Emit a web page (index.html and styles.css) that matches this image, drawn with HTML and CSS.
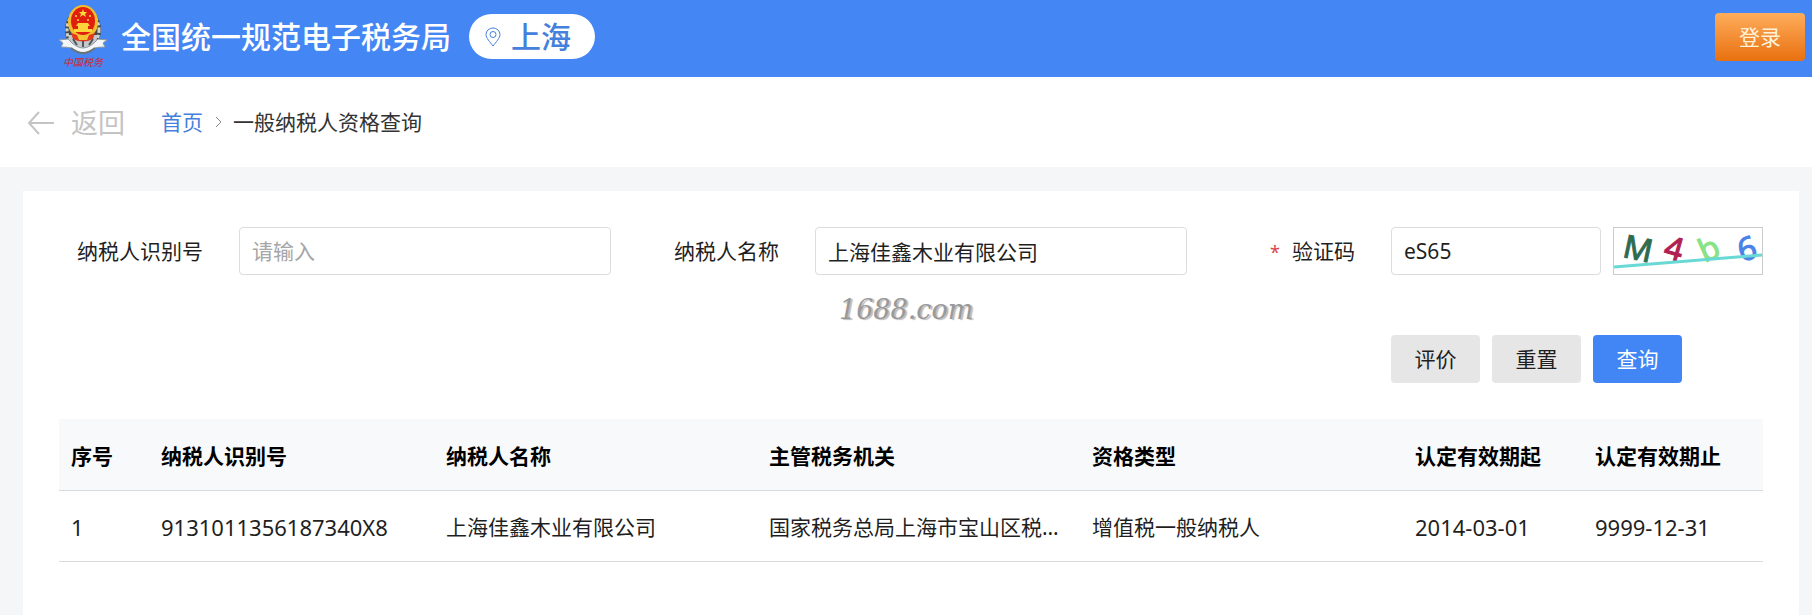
FILE: index.html
```html
<!DOCTYPE html>
<html lang="zh-CN">
<head>
<meta charset="utf-8">
<meta name="viewport" content="width=device-width, initial-scale=1">
<title>一般纳税人资格查询</title>
<link rel="stylesheet" href="styles.css">
</head>
<body>
<header class="topbar">
  <svg class="emblem" viewBox="0 0 50 66" width="50" height="66" role="img" aria-label="中国税务">
    <ellipse cx="25" cy="26" rx="18" ry="22" fill="#454a50"/>
    <ellipse cx="25" cy="26" rx="16" ry="20" fill="none" stroke="#d6d4c8" stroke-width="3" stroke-dasharray="3 2"/>
    <path d="M10 31c2 9 8 14 15 14s13-5 15-14z" fill="#c3c8cc"/>
    <ellipse cx="25" cy="18" rx="15" ry="17" fill="#f3bd2b"/>
    <ellipse cx="25" cy="17" rx="12" ry="14" fill="#e0200f"/>
    <path d="M25 5l1 3h3l-2 2 1 3-3-2-3 2 1-3-2-2h3z" fill="#ffdc3c"/>
    <g fill="#ffd43a"><circle cx="18" cy="12" r="1"/><circle cx="32" cy="12" r="1"/><circle cx="20" cy="16" r="1"/><circle cx="30" cy="16" r="1"/><path d="M20 19h10l2 3h-2v3h4v3H16v-3h4v-3h-2z"/></g>
    <path d="M13 29q12 5 24 0l-2 6q-10 5-20 0z" fill="#e2391c"/>
    <path d="M19 31h12l-2 5h-8z" fill="#f5c434"/>
    <path d="M15 35l4 6M35 35l-4 6M25 37v6" stroke="#50565c" stroke-width="2"/>
    <path d="M1 36l9-1q8 9 15 9t15-9l9 1-4 3 2 4q-7 0-10 1-6 5-12 5t-12-5q-3-1-10-1l2-4z" fill="#f4f6f7" stroke="#8f989f"/>
    <path d="M13 44q6 5 12 5t12-5" fill="none" stroke="#6c7378" stroke-width="2"/>
    <text x="25" y="62" text-anchor="middle" class="emblem-text">中国税务</text>
  </svg>
  <h1 class="site-name">全国统一规范电子税务局</h1>
  <button type="button" class="region">
    <svg viewBox="0 0 16 20" width="16" height="20" fill="none" stroke="currentColor" aria-hidden="true">
      <path d="M8 19C5 15 1 11 1 7.500a7 6.500 0 0 1 14 0C15 11 11 15 8 19z"/><circle cx="8" cy="7.500" r="3"/>
    </svg>
    <span>上海</span>
  </button>
  <button type="button" class="login">登录</button>
</header>

<nav class="crumbs" aria-label="面包屑">
  <a href="#" class="back">
    <svg viewBox="0 0 28 24" width="28" height="24" fill="none" stroke="currentColor" stroke-width="2" aria-hidden="true"><path d="M12 1L2 12l10 11M2 12h25"/></svg>
    <span>返回</span>
  </a>
  <a href="#" class="home">首页</a>
  <svg class="chevron" viewBox="0 0 8 12" width="8" height="12" fill="none" stroke="currentColor" aria-hidden="true"><path d="M1 1l5 5-5 5"/></svg>
  <span>一般纳税人资格查询</span>
</nav>

<main class="card">
  <form class="query">
    <div class="field">
      <label for="tax-id">纳税人识别号</label>
      <input id="tax-id" type="text" placeholder="请输入">
    </div>
    <div class="field">
      <label for="tax-name">纳税人名称</label>
      <input id="tax-name" type="text" value="上海佳鑫木业有限公司">
    </div>
    <div class="field">
      <label for="code"><span class="required">*</span>验证码</label>
      <div class="code-row">
        <input id="code" type="text" value="eS65" required>
        <svg class="captcha" viewBox="0 0 148 46" role="img" aria-label="验证码图片">
          <text x="24" y="32" transform="rotate(12 24 21)" fill="#2f6b50" stroke="#2f6b50">M</text>
          <text x="60" y="32" transform="rotate(16 60 21)" fill="#b02050" stroke="#b02050">4</text>
          <text x="95" y="32" transform="rotate(-24 95 21)" fill="#86e386" stroke="#86e386">b</text>
          <text x="133" y="32" transform="rotate(-16 133 21)" fill="#4a82e8" stroke="#4a82e8">6</text>
          <path d="M0 39L148 27" stroke="#68d9d5" stroke-width="3"/>
        </svg>
      </div>
    </div>
    <div class="watermark">1688.com</div>
    <div class="actions">
      <button type="button" class="btn">评价</button>
      <button type="reset" class="btn">重置</button>
      <button type="button" class="btn primary">查询</button>
    </div>
  </form>

  <table class="results">
    <colgroup>
      <col class="c-no"><col class="c-id"><col class="c-wide"><col class="c-wide"><col class="c-wide"><col class="c-date"><col class="c-date">
    </colgroup>
    <thead>
      <tr><th>序号</th><th>纳税人识别号</th><th>纳税人名称</th><th>主管税务机关</th><th>资格类型</th><th>认定有效期起</th><th>认定有效期止</th></tr>
    </thead>
    <tbody>
      <tr><td class="num">1</td><td class="num">9131011356187340X8</td><td>上海佳鑫木业有限公司</td><td>国家税务总局上海市宝山区税务局</td><td>增值税一般纳税人</td><td class="num">2014-03-01</td><td class="num">9999-12-31</td></tr>
    </tbody>
  </table>
</main>
</body>
</html>
```
FILE: styles.css
```css
* { box-sizing: border-box; }

body {
  margin: 0;
  min-height: 100vh;
  display: flex;
  flex-direction: column;
  background: #f5f6f8;
  color: #1f1f1f;
  font: 21px/32px "Noto Sans", "Noto Sans CJK SC", sans-serif;
}

button, input { font: inherit; color: inherit; }
button { border: 0; padding: 0; cursor: pointer; }
a { text-decoration: none; }

.topbar {
  display: flex;
  align-items: center;
  height: 77px;
  padding: 0 7px 4px 58px;
  background: #4486f4;
}

.emblem { flex: none; }
.emblem-text {
  fill: #d8232e;
  font: italic 10px "Noto Sans CJK SC", sans-serif;
}

.site-name {
  margin: 0 0 0 13px;
  color: #fff;
  font-size: 30px;
  font-weight: 500;
  line-height: 45px;
  white-space: nowrap;
}

.region {
  display: flex;
  align-items: center;
  gap: 10px;
  height: 45px;
  margin-left: 18px;
  padding: 0 24px 0 16px;
  border-radius: 23px;
  background: #fff;
  color: #4480dc;
  font-size: 30px;
  font-weight: 500;
  line-height: 45px;
  white-space: nowrap;
}

.login {
  width: 90px;
  height: 48px;
  margin-left: auto;
  border-radius: 4px;
  background: linear-gradient(#ffad5c, #e8700f);
  color: #fff3dc;
}

.crumbs {
  display: flex;
  align-items: center;
  height: 90px;
  padding: 0 27px;
  background: #fff;
  color: #333;
}
.back {
  display: flex;
  align-items: center;
  gap: 16px;
  margin-right: 36px;
  padding-top: 2px;
  color: #c4c4c4;
  font-size: 27px;
}
.home { color: #4480dc; }
.chevron { margin: 0 10px 0 12px; color: #888; }

.card {
  flex: 1;
  margin: 24px 13px 0 23px;
  padding: 36px 36px 24px;
  background: #fff;
}

.query {
  display: grid;
  grid-template-columns: repeat(3, minmax(0, 1fr));
  column-gap: 24px;
  margin-bottom: 36px;
}
.field {
  display: grid;
  grid-template-columns: 180px minmax(0, 1fr);
  align-items: center;
}
.field label {
  padding-right: 36px;
  text-align: right;
  white-space: nowrap;
}
.required { margin-right: 12px; color: #d9434e; font-size: 18px; }

.field input {
  width: 100%;
  min-width: 0;
  height: 48px;
  padding: 0 12px;
  border: 1px solid #dcdcdc;
  border-radius: 4px;
  background: #fff;
}
.field input::placeholder { color: #a6a6a6; opacity: 1; }

.code-row { display: flex; gap: 12px; }
.field .code-row input { flex: 1; }
.captcha {
  flex: none;
  width: 150px;
  height: 48px;
  border: 1px solid #ccc;
  overflow: visible;
  font: 32px "Noto Sans", sans-serif;
  text-anchor: middle;
}

.watermark {
  grid-column: 2;
  height: 60px;
  padding: 18px 0 0 204px;
  color: #999;
  font: italic 27px/34px "DejaVu Serif", serif;
  text-shadow: 2px 1px 1px #bbb;
}

.actions {
  grid-column: 3;
  grid-row: 3;
  display: flex;
  gap: 12px;
  padding-left: 180px;
}
.btn {
  width: 89px;
  height: 48px;
  border-radius: 4px;
  background: #e6e6e6;
}
.primary { background: #4285f4; color: #fff; }

.results {
  width: 100%;
  table-layout: fixed;
  border-collapse: collapse;
}
.results th, .results td {
  height: 71px;
  padding: 3px 12px 0;
  border-bottom: 1px solid #d9dbde;
  overflow: hidden;
  text-align: left;
  text-overflow: ellipsis;
  white-space: nowrap;
}
.results th { background: #f8f9fb; color: #000; font-weight: 700; }
.results .num { font-size: 22px; }
.c-no { width: 90px; }
.c-id { width: 285px; }
.c-date { width: 180px; }
```
